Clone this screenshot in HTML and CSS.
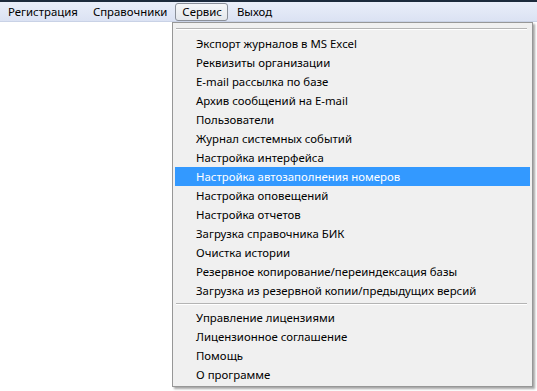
FILE: index.html
```html
<!DOCTYPE html>
<html lang="ru">
<head>
    <meta charset="UTF-8">
    <title>Сервис</title>
    <link rel="stylesheet" href="styles.css">
</head>
<body>
    <div class="window-top"></div>

    <!-- Main menu -->
    <div class="menubar">
        <span class="menu-item">Регистрация</span>
        <span class="menu-item">Справочники</span>
        <span class="menu-item open">Сервис</span>
        <span class="menu-item">Выход</span>
    </div>

    <div class="workspace"></div>

    <!-- Service dropdown -->
    <div class="dropdown">
        <div class="sep top-sep"></div>
        <div class="drop-item">Экспорт журналов в MS Excel</div>
        <div class="drop-item">Реквизиты организации</div>
        <div class="drop-item">E-mail рассылка по базе</div>
        <div class="drop-item">Архив сообщений на E-mail</div>
        <div class="drop-item">Пользователи</div>
        <div class="drop-item">Журнал системных событий</div>
        <div class="drop-item">Настройка интерфейса</div>
        <div class="drop-item active">Настройка автозаполнения номеров</div>
        <div class="drop-item">Настройка оповещений</div>
        <div class="drop-item">Настройка отчетов</div>
        <div class="drop-item">Загрузка справочника БИК</div>
        <div class="drop-item">Очистка истории</div>
        <div class="drop-item">Резервное копирование/переиндексация базы</div>
        <div class="drop-item">Загрузка из резервной копии/предыдущих версий</div>
        <div class="sep"></div>
        <div class="drop-item">Управление лицензиями</div>
        <div class="drop-item">Лицензионное соглашение</div>
        <div class="drop-item">Помощь</div>
        <div class="drop-item">О программе</div>
    </div>
</body>
</html>
```

FILE: styles.css
```css
* {
    margin: 0;
    padding: 0;
    box-sizing: border-box;
}

body {
    font-family: 'Noto Sans', 'DejaVu Sans', sans-serif;
    font-size: 11.4px;
    color: #000;
    background: #fff;
    width: 537px;
    height: 391px;
    overflow: hidden;
    position: relative;
}

.window-top {
    height: 2px;
    background: #1c2a3c;
}

.menubar {
    display: flex;
    align-items: center;
    height: 20px;
    padding-left: 1px;
    background: linear-gradient(180deg, #e9eef9 0%, #dbe2f3 100%);
    border-bottom: 1px solid #c9d2e6;
}

.menu-item {
    padding: 0 5px 0 6px;
    height: 18px;
    line-height: 16px;
    margin-right: 2px;
    border: 1px solid transparent;
    border-radius: 3px;
}

.menu-item.open {
    border-color: #8a8f99;
    background: linear-gradient(180deg, #f6f7f9 0%, #e4e7ec 100%);
}

.dropdown {
    position: absolute;
    left: 172px;
    top: 22px;
    width: 361px;
    height: 365px;
    background: #f0f0f0;
    border: 1px solid #979797;
    padding: 0 2px;
    box-shadow: 2px 2px 2px rgba(0, 0, 0, 0.35);
}

.sep {
    height: 8px;
    margin: 0 2px 0 0;
    position: relative;
}

.sep::after {
    content: '';
    position: absolute;
    left: 1px;
    right: 1px;
    top: 3px;
    border-top: 1px solid #b4b4b4;
    border-bottom: 1px solid #fff;
}

.top-sep {
    height: 11px;
}

.top-sep::after {
    top: 5px;
}

.drop-item {
    height: 19px;
    line-height: 19px;
    padding-left: 21px;
    white-space: nowrap;
}

.drop-item.active {
    background: #3399ff;
    color: #fff;
}
```
